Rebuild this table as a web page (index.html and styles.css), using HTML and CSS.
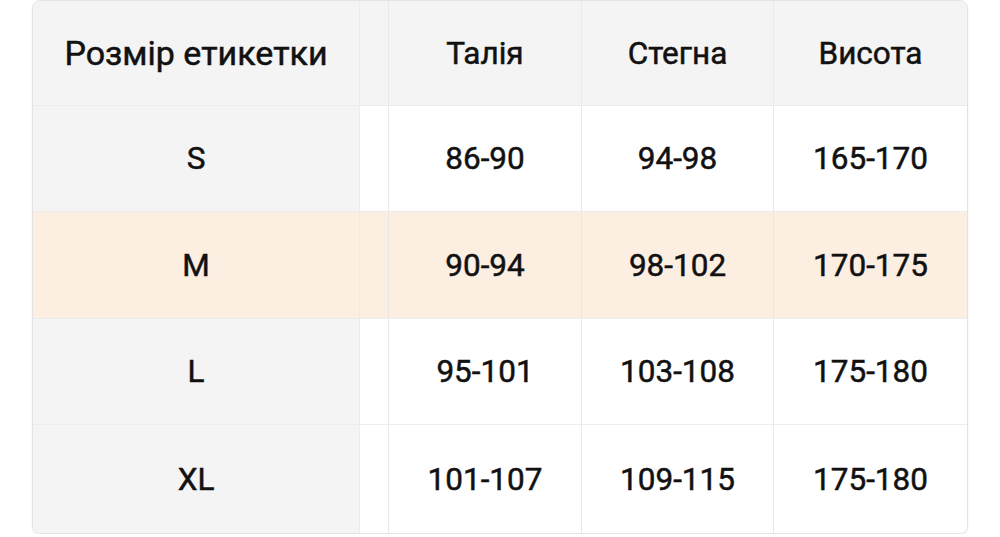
FILE: index.html
```html
<!DOCTYPE html>
<html lang="uk">
<head>
<meta charset="utf-8">
<title>Розмірна сітка</title>
<link rel="stylesheet" href="styles.css">
</head>
<body>
<div class="card">
  <div class="row head">
    <div class="cell first">Розмір етикетки</div>
    <div class="cell gap"></div>
    <div class="cell">Талія</div>
    <div class="cell">Стегна</div>
    <div class="cell last">Висота</div>
  </div>
  <div class="row">
    <div class="cell first">S</div>
    <div class="cell gap"></div>
    <div class="cell">86-90</div>
    <div class="cell">94-98</div>
    <div class="cell last">165-170</div>
  </div>
  <div class="row hl">
    <div class="cell first">M</div>
    <div class="cell gap"></div>
    <div class="cell">90-94</div>
    <div class="cell">98-102</div>
    <div class="cell last">170-175</div>
  </div>
  <div class="row">
    <div class="cell first">L</div>
    <div class="cell gap"></div>
    <div class="cell">95-101</div>
    <div class="cell">103-108</div>
    <div class="cell last">175-180</div>
  </div>
  <div class="row end">
    <div class="cell first">XL</div>
    <div class="cell gap"></div>
    <div class="cell">101-107</div>
    <div class="cell">109-115</div>
    <div class="cell last">175-180</div>
  </div>
</div>
</body>
</html>
```
FILE: styles.css
```css
html, body {
  margin: 0;
  padding: 0;
  background: #ffffff;
}
body {
  font-family: Roboto, "Noto Sans", "Liberation Sans", sans-serif;
  color: #111111;
}
.card {
  margin: 0 32px;
  width: 934px;
  border: 1px solid #e3e3e3;
  border-radius: 8px;
  overflow: hidden;
  box-shadow: 0 1px 2px rgba(0,0,0,0.10);
}
.row {
  display: grid;
  grid-template-columns: 327px 29px 193px 192px 1fr;
  height: 106px;
  border-bottom: 1px solid #ececec;
  box-sizing: border-box;
  background: #ffffff;
}
.row.head {
  height: 105px;
  background: #f4f4f4;
}
.row.hl {
  background: #fdeee2;
  height: 107px;
}
.row.end {
  border-bottom: none;
  height: 108px;
}
.cell {
  display: flex;
  align-items: center;
  justify-content: center;
  font-size: 31.5px;
  font-weight: 400;
  -webkit-text-stroke: 0.5px #111111;
  border-right: 1px solid #e9e9e9;
}
.cell.first {
  background: #f4f4f4;
  border-right-color: #ececec;
}
.head .cell.first {
  font-size: 34px;
}
.row.hl .cell.first {
  background: #fdeee2;
}
.cell.last {
  border-right: none;
}
```
